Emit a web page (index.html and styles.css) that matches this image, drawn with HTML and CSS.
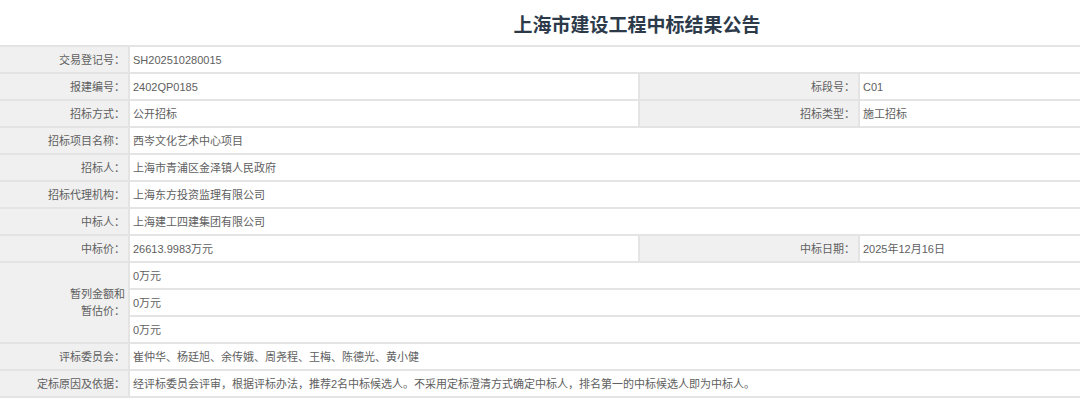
FILE: index.html
```html
<!DOCTYPE html>
<html lang="zh-CN">
<head>
<meta charset="utf-8">
<title>上海市建设工程中标结果公告</title>
<link rel="stylesheet" href="styles.css">
</head>
<body>
<div class="page">
  <h1 class="title">上海市建设工程中标结果公告</h1>
  <table class="info">
    <colgroup>
      <col class="c-label">
      <col class="c-value">
      <col class="c-label2">
      <col class="c-value2">
    </colgroup>
    <tbody>
      <tr><th>交易登记号：</th><td colspan="3">SH202510280015</td></tr>
      <tr><th>报建编号：</th><td>2402QP0185</td><th>标段号：</th><td>C01</td></tr>
      <tr><th>招标方式：</th><td>公开招标</td><th>招标类型：</th><td>施工招标</td></tr>
      <tr><th>招标项目名称：</th><td colspan="3">西岑文化艺术中心项目</td></tr>
      <tr><th>招标人：</th><td colspan="3">上海市青浦区金泽镇人民政府</td></tr>
      <tr><th>招标代理机构：</th><td colspan="3">上海东方投资监理有限公司</td></tr>
      <tr><th>中标人：</th><td colspan="3">上海建工四建集团有限公司</td></tr>
      <tr><th>中标价：</th><td>26613.9983万元</td><th>中标日期：</th><td>2025年12月16日</td></tr>
      <tr><th rowspan="3" class="wrap">暂列金额和<br>暂估价：</th><td colspan="3">0万元</td></tr>
      <tr><td colspan="3">0万元</td></tr>
      <tr><td colspan="3">0万元</td></tr>
      <tr><th>评标委员会：</th><td colspan="3">崔仲华、杨廷旭、余传娥、周尧程、王梅、陈德光、黄小健</td></tr>
      <tr><th>定标原因及依据：</th><td colspan="3">经评标委员会评审，根据评标办法，推荐2名中标候选人。不采用定标澄清方式确定中标人，排名第一的中标候选人即为中标人。</td></tr>
    </tbody>
  </table>
</div>
</body>
</html>
```

FILE: styles.css
```css
html, body {
  margin: 0;
  padding: 0;
  background: #ffffff;
}

body {
  font-family: "Liberation Sans", "Noto Sans CJK SC", sans-serif;
  color: #606060;
  overflow: hidden;
}

.page {
  width: 1080px;
}

.title {
  margin: 0;
  height: 46px;
  padding-left: 194px;
  box-sizing: border-box;
  display: flex;
  align-items: center;
  justify-content: center;
  font-family: "Noto Sans CJK SC", sans-serif;
  font-size: 19px;
  font-weight: 700;
  color: #2c3a4a;
}

.info {
  width: 1084px;
  margin-left: -2px;
  margin-top: -1px;
  border-collapse: collapse;
  table-layout: fixed;
  font-size: 11px;
}

.c-label { width: 130px; }
.c-value { width: 510px; }
.c-label2 { width: 220px; }
.c-value2 { width: 224px; }

.info th,
.info td {
  border: 2px solid #e4e4e4;
  height: 27px;
  padding: 0 4px;
  box-sizing: border-box;
  white-space: nowrap;
  vertical-align: middle;
  line-height: 14px;
}

.info th {
  background: #f0f0f0;
  font-weight: 400;
  text-align: right;
  padding-right: 3px;
}

.info td {
  background: #ffffff;
  text-align: left;
  padding-left: 3px;
}

.info th.wrap {
  line-height: 17px;
}
```
